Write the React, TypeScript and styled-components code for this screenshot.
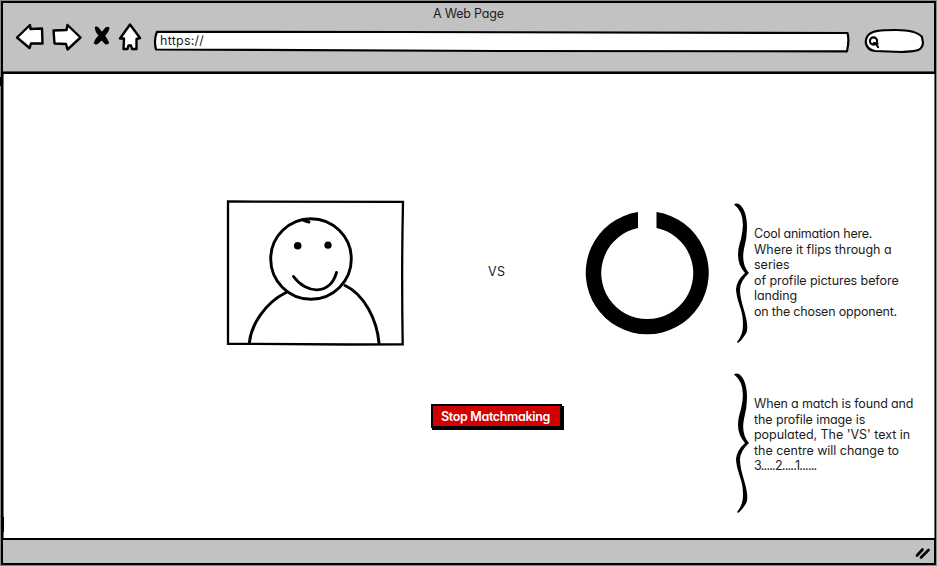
import React from "react";
import styled, { createGlobalStyle } from "styled-components";

const GlobalStyle = createGlobalStyle`
  *, *::before, *::after { box-sizing: border-box; }
  body { margin: 0; background: #fff; overflow: hidden; }
`;

const Page = styled.div`
  width: 937px;
  height: 566px;
  padding: 1px;
  background: #fff;
  color: #1c1c1c;
  font-family: Inter, "Noto Sans", sans-serif;
  font-feature-settings: "cv11";
  font-size: 12.5px;
  line-height: 15.6px;
`;

const BrowserFrame = styled.div`
  position: relative;
  display: grid;
  grid-template-columns: minmax(0, 1fr);
  grid-template-rows: 71px 1fr 25.5px;
  width: 935px;
  height: 564px;
  border: 2px solid #000;
  box-shadow: 0 0 0 1px #8a8a8a;
`;

const InkBlot = styled.i<{ $left: number; $top: number; $height: number }>`
  position: absolute;
  left: ${(p) => p.$left}px;
  top: ${(p) => p.$top}px;
  width: 3px;
  height: ${(p) => p.$height}px;
  background: #000;
`;

const Header = styled.header`
  display: flex;
  flex-direction: column;
  background: #c2c2c2;
  border-bottom: 2px solid #000;
  box-shadow: inset 0 -1px 0 #555;
`;

const Title = styled.div`
  height: 22px;
  padding: 3px 0 0 430px;
  white-space: nowrap;
`;

const Toolbar = styled.div`
  display: flex;
  height: 32px;
`;

const NavIcons = styled.svg`
  flex: none;
  width: 150px;
  height: 36px;
  margin-top: -5px;
`;

const AddressBar = styled.div`
  position: relative;
  flex: none;
  width: 698px;
  height: 24px;
  margin-top: 5px;
`;

const AddressOutline = styled.svg`
  display: block;
  width: 698px;
  height: 24px;
`;

const Address = styled.span`
  position: absolute;
  left: 7px;
  top: 3px;
`;

const SearchBox = styled.svg`
  flex: none;
  width: 66px;
  height: 30px;
  margin: 1px 0 0 10px;
`;

const Content = styled.main`
  display: grid;
  grid-template-columns: 223px 178px 181px 126px 21px 1fr;
  grid-template-rows: 271px 1fr;
  padding-top: 23px;
  border: solid #777;
  border-width: 0 1px;
  margin-right: -1px;
`;

const Portrait = styled.svg`
  grid-column: 2;
  width: 180px;
  height: 150px;
  margin: 102px 0 0 -1px;
`;

const Versus = styled.div`
  grid-column: 3;
  padding: 167px 0 0 83px;
`;

const Spinner = styled.svg`
  grid-column: 4;
  width: 126px;
  height: 126px;
  margin: 113px 0 0 -2px;
`;

const Note = styled.aside<{ $top: number }>`
  grid-column: 5 / 7;
  display: flex;
  width: 203px;
  height: 144px;
  margin: ${(p) => p.$top}px 0 0 20px;
`;

const Brace = styled.svg`
  flex: none;
  width: 21px;
  height: 144px;
`;

const NoteText = styled.div`
  display: flex;
  flex-direction: column;
  padding: 25px 0 0 1px;
`;

const Line = styled.span<{ $track: number }>`
  height: 15.6px;
  letter-spacing: ${(p) => p.$track}px;
  white-space: nowrap;
`;

const Tracked = styled.span<{ $track: number }>`
  letter-spacing: ${(p) => p.$track}px;
`;

const Action = styled.div`
  grid-column: 2 / 5;
  grid-row: 2;
  padding: 36px 0 0 204px;
`;

const StopButton = styled.button`
  display: block;
  width: 131px;
  height: 24px;
  padding: 1px 2px 0 0;
  border: 2px solid #000;
  background: #d00000;
  box-shadow: 1px 2px 0 #000, 2px 2px 0 #000;
  color: #fff;
  font: 600 12.5px/18px Inter, sans-serif;
  font-feature-settings: "cv11";
  white-space: nowrap;
`;

const Footer = styled.footer`
  display: flex;
  justify-content: flex-end;
  background: #c2c2c2;
  border-top: 2px solid #000;
`;

const Grip = styled.svg`
  width: 20px;
  height: 20px;
  margin-top: 3px;
`;

type NoteLine = [string, number];

const flipNote: NoteLine[] = [
  ["Cool animation here.", -0.24],
  ["Where it flips through a", -0.04],
  ["series", 0],
  ["of profile pictures before", -0.07],
  ["landing", -0.1],
  ["on the chosen opponent.", -0.2],
];

const matchNote: NoteLine[] = [
  ["When a match is found and", -0.16],
  ["the profile image is", -0.1],
  ["populated, The 'VS' text in", -0.03],
  ["the centre will change to", -0.03],
  ["3.....2.....1......", -0.75],
];

function Annotation({ lines, top }: { lines: NoteLine[]; top: number }) {
  return (
    <Note $top={top}>
      <Brace viewBox="732 201 21 144">
        <path d="M734 204.5 Q736 203 739 204 Q747 210 747 228 Q747 238 744 249 Q741 264 749 273 Q740 281 740 290 Q740 297 744 310 Q750 330 745 335 Q742 340 738 343 L737 342 Q743 335 743 325 Q743 315 740 307 Q736 295 736 289 Q737 280 745 273 Q738 265 738 255 Q738 248 741 239 Q747 214 734 204.5Z" />
      </Brace>
      <NoteText>
        {lines.map(([text, track]) => (
          <Line key={text} $track={track}>{text}</Line>
        ))}
      </NoteText>
    </Note>
  );
}

export default function App() {
  return (
    <Page>
      <GlobalStyle />
      <BrowserFrame>
        <Header>
          <Title><Tracked $track={-0.2}>A Web Page</Tracked></Title>
          <Toolbar>
            <NavIcons viewBox="3 20 150 36" fill="#fff" stroke="#000" strokeWidth="2.4" strokeLinejoin="round" strokeLinecap="round">
              <path d="M17 37.5 L30 25 L30.5 29 L42 28.5 L42.5 43.5 L31 43.5 L29.5 48 Z" />
              <path d="M53.5 30.5 L66.5 30 L67.5 25 L80.5 37.5 L67.5 49.5 L66 44 L54.5 43.5 Z" />
              <path d="M94.6 27 Q96.5 25.6 98.6 27.5 L102 31.8 L105.4 27.5 Q108 25.6 109.6 28 Q108.8 32.5 105.2 35.8 Q107.8 39.5 109.2 42.8 Q107.6 45.6 105 44 L101.7 40.5 L98 43.8 Q95.5 45.6 93.7 43 Q94.8 39 98.4 35.6 Q95 31.8 94.6 27Z" fill="#000" stroke="none" />
              <path d="M130 24.5 L120 38.5 L124 38.5 L123.5 49 L127.5 49 L128.5 45.5 L131 45.5 L132 49 L136.5 49 L136.5 39 L140 38 Z" />
            </NavIcons>
            <AddressBar>
              <AddressOutline viewBox="153 30 698 24" fill="#fff" stroke="#000" strokeWidth="2.2" strokeLinejoin="round">
                <path d="M157 31.8 L400 32 L847.5 33 Q849.5 40 847 51.3 L500 51 L156 49.5 Q153.5 40 157 31.8Z" />
              </AddressOutline>
              <Address><Tracked $track={0.25}>https://</Tracked></Address>
            </AddressBar>
            <SearchBox viewBox="861 26 66 30" fill="#fff" stroke="#000" strokeWidth="2.2">
              <path d="M867 37 C870 30 883 30 896 30 C908 30 918 32 922 37 L923 43 C922 52 914 51 902 52 L875 51 C867 50 864 43 867 37Z" />
              <circle cx="873.5" cy="41" r="3.6" />
              <path d="M873.8 43 L877.5 43.5 M876 44 L878 47" strokeLinecap="round" />
            </SearchBox>
          </Toolbar>
        </Header>
        <Content>
          <Portrait viewBox="226 199 180 150" fill="none" stroke="#000" strokeWidth="2.9" strokeLinecap="round">
            <path d="M228 201.5 L403 201.8 Q401.5 270 402.7 344.3 L350 344.5 L228 343.8Z" strokeWidth="2.3" strokeLinejoin="miter" />
            <ellipse cx="311" cy="259" rx="40.3" ry="40.2" />
            <path d="M304 220.5 L309 222" />
            <path d="M249.3 343 C251 325 265 303 286 292.5 M345 285.5 C364 294 377 320 379 343" />
            <path d="M293.5 276.5 C306 294 330 296 336.5 272.5" />
            <circle cx="297.7" cy="245.8" r="3.8" fill="#000" stroke="none" />
            <circle cx="328" cy="245.2" r="3.6" fill="#000" stroke="none" />
          </Portrait>
          <Versus><Tracked $track={0.3}>VS</Tracked></Versus>
          <Spinner viewBox="584 210 126 126">
            <path d="M638 212 A61.5 61.5 0 1 0 656.5 212 L656.5 228 A46 46 0 1 1 638 228Z" />
          </Spinner>
          <Annotation top={104} lines={flipNote} />
          <Action>
            <StopButton><Tracked $track={-0.35}>Stop Matchmaking</Tracked></StopButton>
          </Action>
          <Annotation top={3} lines={matchNote} />
        </Content>
        <Footer>
          <Grip viewBox="914 543 20 20" stroke="#000" strokeWidth="2.7" strokeLinecap="round">
            <path d="M917 555.5 L922.5 549.5 M921 557.5 L928.5 550" />
          </Grip>
        </Footer>
        <InkBlot $left={-3} $top={74} $height={9} />
        <InkBlot $left={-2} $top={514} $height={15} />
      </BrowserFrame>
    </Page>
  );
}
